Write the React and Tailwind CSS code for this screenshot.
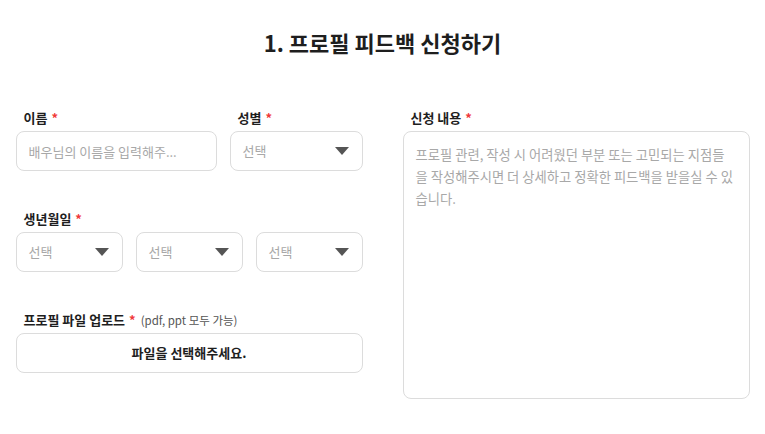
function Label({ children, note }) {
  return (
    <div className="flex items-center h-4 pl-2 mb-[5px] text-[13px] font-bold text-[#1e1e1e] leading-4">
      <span>{children}</span>
      <span className="ml-1 text-[#f03a3a]">*</span>
      {note && <span className="ml-[5px] text-[11.5px] font-normal text-[#555]">{note}</span>}
    </div>
  );
}

function Select({ className }) {
  return (
    <div className={`h-10 flex items-center justify-between pl-3 pr-[13px] border border-[#dcdcdc] rounded-lg bg-white ${className}`}>
      <span className="text-[13px] text-[#a8a8a8]">선택</span>
      <svg width="14" height="8" viewBox="0 0 14 8">
        <path d="M0 0h14L7 8z" fill="#555" />
      </svg>
    </div>
  );
}

export default function App() {
  return (
    <div
      className="w-[765px] h-[434px] bg-white overflow-hidden"
      style={{ fontFamily: '"Noto Sans CJK KR", "Noto Sans", sans-serif' }}
    >
      <h1 className="pt-[27px] text-center text-[22px] font-bold text-[#1e1e1e] leading-[30px]">
        1. 프로필 피드백 신청하기
      </h1>

      <div className="mt-[53px] mx-auto w-[734px] grid grid-cols-2 gap-10">
        <div className="flex flex-col">
          <div className="flex gap-[13px]">
            <div className="w-[201px]">
              <Label>이름</Label>
              <input
                className="w-full h-10 px-3 border border-[#dcdcdc] rounded-lg text-[13px] outline-none placeholder:text-[#a8a8a8]"
                placeholder="배우님의 이름을 입력해주..."
              />
            </div>
            <div className="flex-1">
              <Label>성별</Label>
              <Select />
            </div>
          </div>

          <div className="mt-10">
            <Label>생년월일</Label>
            <div className="grid grid-cols-3 gap-[13px]">
              <Select />
              <Select />
              <Select />
            </div>
          </div>

          <div className="mt-10">
            <Label note="(pdf, ppt 모두 가능)">프로필 파일 업로드</Label>
            <button className="w-full h-10 border border-[#dcdcdc] rounded-lg bg-white text-[13px] font-semibold text-[#1e1e1e]">
              파일을 선택해주세요.
            </button>
          </div>
        </div>

        <div>
          <Label>신청 내용</Label>
          <textarea
            className="w-full h-[268px] block resize-none pl-3 pr-1 py-[12px] border border-[#dcdcdc] rounded-lg text-[13.3px] leading-[22px] outline-none placeholder:text-[#a8a8a8]"
            placeholder={"프로필 관련, 작성 시 어려웠던 부분 또는 고민되는 지점들\n을 작성해주시면 더 상세하고 정확한 피드백을 받을실 수 있\n습니다."}
          />
        </div>
      </div>
    </div>
  );
}
